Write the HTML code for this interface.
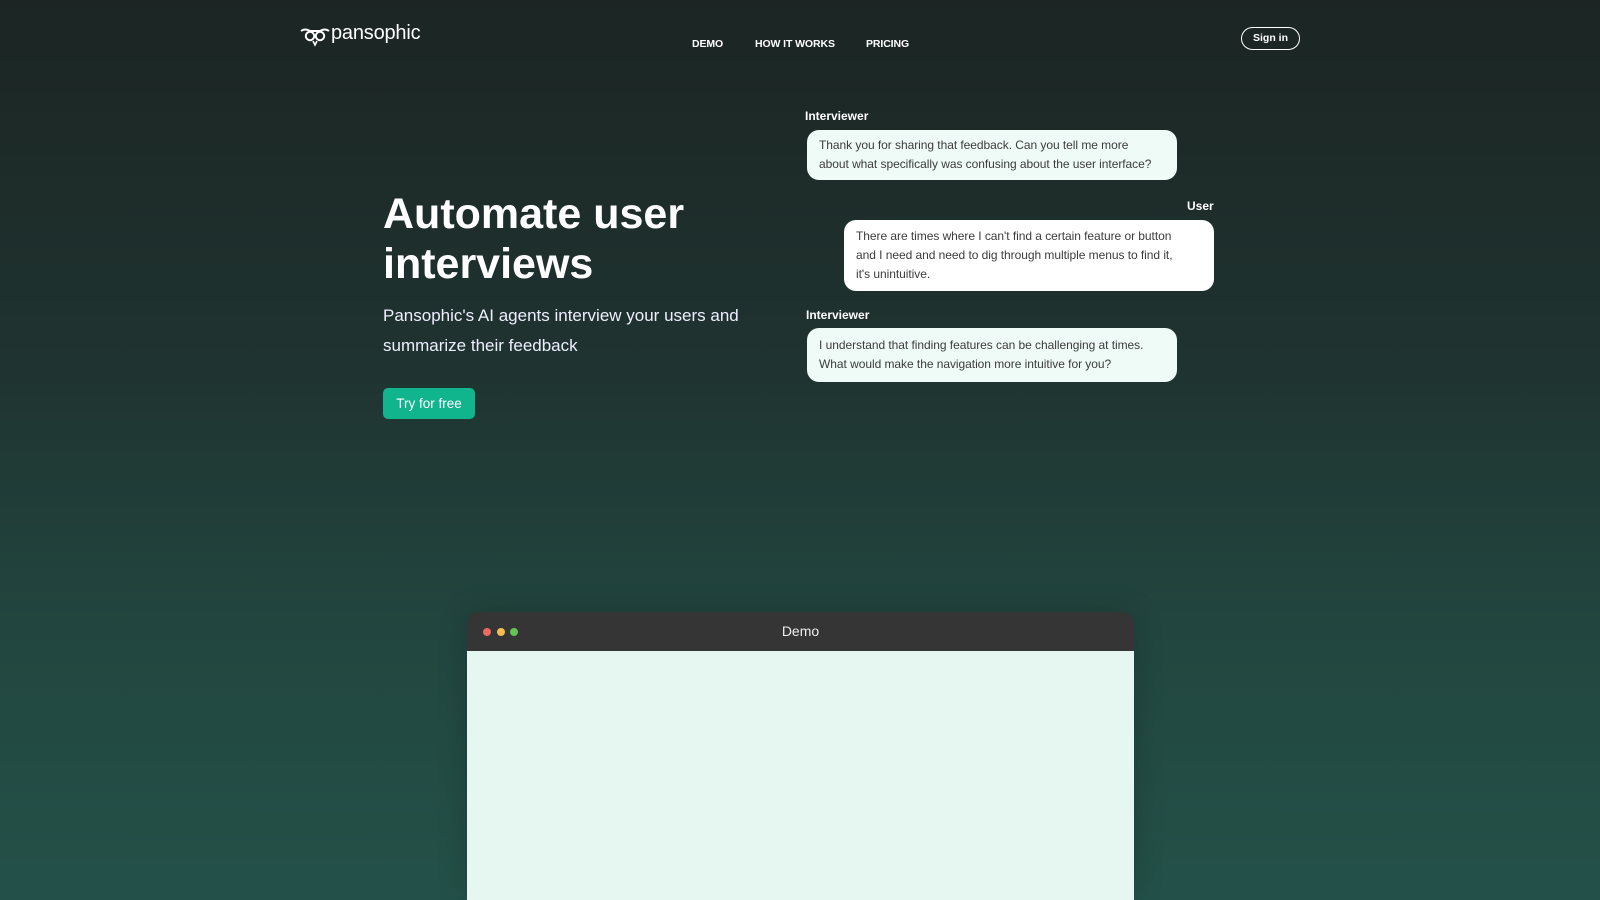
<!DOCTYPE html>
<html style="background:#235149"><head><meta charset="utf-8"><style>
*{margin:0;padding:0;box-sizing:border-box}
html,body{width:1600px;height:900px;overflow:hidden}
body{font-family:"Liberation Sans",sans-serif;color:#fff;
background:linear-gradient(180deg,#1c2523 0%,#1f3330 40%,#22463f 70%,#235149 100%);position:relative}
.abs{position:absolute}
.nav a{position:absolute;top:38px;font-size:10.5px;color:#fff;text-decoration:none;font-weight:bold;letter-spacing:-0.1px}
.lbl{position:absolute;font-size:12px;font-weight:bold}
.b{position:absolute;background:#effbf7;color:#3c3c3c;font-size:12px;line-height:19px;border-radius:12px;padding:6px 12px;letter-spacing:-0.05px}
</style></head><body>
<div class="abs" style="left:300px;top:24px;display:flex;align-items:center">
<svg width="30" height="24" viewBox="0 0 30 24"><path d="M1 7 Q5 4 10 7 M29 7 Q25 4 20 7 M10 7 L20 7" stroke="#fff" stroke-width="2" fill="none"/><circle cx="10" cy="12" r="4.2" stroke="#fff" stroke-width="2" fill="none"/><circle cx="20" cy="12" r="4.2" stroke="#fff" stroke-width="2" fill="none"/><path d="M13 17 L15 21 L17 17" stroke="#fff" stroke-width="1.6" fill="none"/></svg>
<span style="font-size:20px;margin-left:1px;letter-spacing:-0.2px;position:relative;top:-3px">pansophic</span></div>
<div class="nav"><a style="left:692px">DEMO</a><a style="left:755px">HOW IT WORKS</a><a style="left:866px">PRICING</a></div>
<div class="abs" style="left:1241px;top:27px;width:59px;height:23px;border:1px solid #fff;border-radius:12px;font-size:10.5px;font-weight:bold;text-align:center;line-height:21px">Sign in</div>
<div class="abs" style="left:383px;top:189px;font-size:43px;font-weight:bold;line-height:50px">Automate user<br>interviews</div>
<div class="abs" style="left:383px;top:301px;font-size:17px;line-height:30px;color:#eef">Pansophic's AI agents interview your users and<br>summarize their feedback</div>
<div class="abs" style="left:383px;top:388px;width:92px;height:31px;background:#10b48d;border-radius:5px;font-size:13.5px;text-align:center;line-height:31px">Try for free</div>
<div class="lbl" style="left:805px;top:109px">Interviewer</div>
<div class="b" style="left:807px;top:130px;width:370px">Thank you for sharing that feedback. Can you tell me more<br>about what specifically was confusing about the user interface?</div>
<div class="lbl" style="left:1187px;top:199px">User</div>
<div class="b" style="left:844px;top:220px;width:370px;background:#fff;padding-top:7px;padding-bottom:7px">There are times where I can't find a certain feature or button<br>and I need and need to dig through multiple menus to find it,<br>it's unintuitive.</div>
<div class="lbl" style="left:806px;top:308px">Interviewer</div>
<div class="b" style="left:807px;top:328px;width:370px;padding-top:8px;padding-bottom:8px">I understand that finding features can be challenging at times.<br>What would make the navigation more intuitive for you?</div>
<div class="abs" style="left:467px;top:612px;width:667px;height:288px;border-radius:12px 12px 0 0;overflow:hidden;box-shadow:0 0 30px rgba(0,0,0,.2)">
<div style="height:39px;background:#353535;position:relative;text-align:center;font-size:14px;line-height:39px;color:#eee">Demo
<span class="abs" style="left:16px;top:16px;width:8px;height:8px;border-radius:50%;background:#ec6a5e"></span>
<span class="abs" style="left:30px;top:16px;width:8px;height:8px;border-radius:50%;background:#f4bf4f"></span>
<span class="abs" style="left:43px;top:16px;width:8px;height:8px;border-radius:50%;background:#61c554"></span></div>
<div style="height:249px;background:#e6f6f0"></div></div>
</body></html>
